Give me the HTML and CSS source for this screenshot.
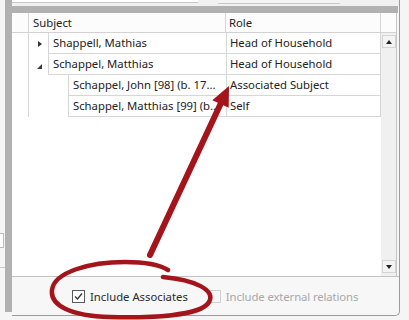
FILE: index.html
```html
<!DOCTYPE html>
<html lang="en">

<head>
    <meta charset="UTF-8">
    <meta name="viewport" content="width=device-width, initial-scale=1.0">
    <title>Relations</title>
    <link rel="stylesheet" href="styles.css">
</head>

<body>
    <div class="screen">
        <div class="side-pane">
            <div class="side-input"></div>
            <div class="side-rule"></div>
        </div>
        <div class="splitter"></div>

        <div class="panel">
            <div class="toolbar">
                <div class="tool-box wide"></div>
                <div class="tool-box"></div>
            </div>
            <div class="panel-band"></div>

            <div class="grid">
                <div class="grid-head">
                    <div class="col-indent"></div>
                    <div class="col-subject">Subject</div>
                    <div class="col-role">Role</div>
                    <div class="col-scroll"></div>
                </div>

                <div class="grid-body">
                    <div class="rows">
                        <div class="row">
                            <div class="row-indent"></div>
                            <div class="expander"><span class="arrow-closed"></span></div>
                            <div class="cell subject">Shappell, Mathias</div>
                            <div class="cell role">Head of Household</div>
                        </div>
                        <div class="row">
                            <div class="row-indent"></div>
                            <div class="expander">
                                <svg class="arrow-open" width="5" height="5" viewBox="0 0 5 5">
                                    <polygon points="5,0 5,5 0,5" fill="#3a3a3a" />
                                </svg>
                            </div>
                            <div class="cell subject">Schappel, Matthias</div>
                            <div class="cell role">Head of Household</div>
                        </div>
                        <div class="row child">
                            <div class="row-indent"></div>
                            <div class="expander"></div>
                            <div class="cell subject">Schappel, John [98] (b. 17...</div>
                            <div class="cell role">Associated Subject</div>
                        </div>
                        <div class="row child">
                            <div class="row-indent"></div>
                            <div class="expander"></div>
                            <div class="cell subject">Schappel, Matthias [99] (b...</div>
                            <div class="cell role">Self</div>
                        </div>
                    </div>

                    <div class="scrollbar">
                        <div class="scroll-btn"><span class="tri-up"></span></div>
                        <div class="scroll-btn"><span class="tri-down"></span></div>
                    </div>
                </div>
            </div>

            <div class="options">
                <label class="option">
                    <span class="check">
                        <svg width="11" height="11" viewBox="0 0 11 11">
                            <polyline points="2,5.5 4.5,8 9,2.5" fill="none" stroke="#333" stroke-width="1.3" />
                        </svg>
                    </span>
                    Include Associates
                </label>
                <label class="option disabled">
                    <span class="check"></span>
                    Include external relations
                </label>
            </div>
        </div>

        <!-- red callout drawn over the screenshot -->
        <svg class="annotation" width="409" height="320" viewBox="0 0 409 320">
            <g fill="none" stroke="#a3141b" stroke-linecap="round">
                <line x1="150" y1="255" x2="221" y2="103" stroke-width="6" />
                <path d="M163 277 C195 280 216 290 209 302 C201 316 150 318 110 317 C70 316 50 305 52 290 C54 272 90 262 125 262 C146 262 160 265 168 270"
                    stroke-width="4.5" />
            </g>
            <polygon points="229,86 212.3,100.2 228.7,107.8" fill="#a3141b" />
        </svg>
    </div>
</body>

</html>
```

FILE: styles.css
```css
body {
    margin: 0;
    padding: 0;
    font-family: "Noto Sans", "Open Sans", sans-serif;
    font-size: 11.3px;
    color: #222;
    background: #f5f5f5;
}

.screen {
    position: relative;
    display: flex;
    width: 409px;
    height: 320px;
    overflow: hidden;
    background: #f5f5f5;
}

.side-pane {
    width: 5px;
    display: flex;
    flex-direction: column;
}

.side-input {
    margin-top: 233px;
    width: 3px;
    height: 13px;
    background: #fff;
    border: 1px solid #bdbdbd;
    border-left: none;
}

.side-rule {
    margin-top: 19px;
    height: 1px;
    background: #c8c8c8;
}

.splitter {
    width: 7px;
    height: 312px;
    background: #b1b1b1;
}

.panel {
    box-sizing: border-box;
    width: 388px;
    height: 316px;
    display: flex;
    flex-direction: column;
    border-right: 1px solid #9c9c9c;
    border-bottom: 1px solid #9c9c9c;
    border-bottom-right-radius: 5px;
    background: #f7f7f7;
}

.toolbar {
    height: 6px;
    display: flex;
    gap: 20px;
    background: #f0f0f0;
}

.tool-box {
    width: 122px;
    height: 3px;
    background: #f3f3f3;
    border-bottom: 1px solid #c8c8c8;
}

.tool-box.wide {
    width: 186px;
    height: 2px;
    background: #fff;
}

.panel-band {
    height: 7px;
    margin-right: 1px;
    background: #b1b1b1;
}

.grid {
    box-sizing: border-box;
    height: 263px;
    width: 385px;
    display: flex;
    flex-direction: column;
    border-right: 1px solid #c4c4c4;
    background: #fff;
}

.grid-head {
    display: flex;
    height: 20px;
    box-sizing: border-box;
    border-bottom: 1px solid #d2d2d2;
    background: #fcfcfc;
    line-height: 19px;
}

.col-indent {
    width: 16px;
    border-right: 1px solid #d6d6d6;
}

.col-subject {
    width: 192px;
    padding-left: 4px;
    border-right: 1px solid #d6d6d6;
}

.col-role {
    width: 151px;
    padding-left: 3px;
    border-right: 1px solid #d6d6d6;
}

.col-scroll {
    flex: 1;
}

.grid-body {
    flex: 1;
    display: flex;
}

.rows {
    width: 369px;
}

.row {
    display: flex;
    height: 21px;
}

.row-indent {
    width: 16px;
    border-right: 1px solid #d6d6d6;
}

.expander {
    width: 19px;
    display: flex;
    align-items: center;
}

.row.child .expander {
    width: 39px;
}

.arrow-closed {
    margin-left: 9px;
    width: 0;
    height: 0;
    border-left: 4px solid #333;
    border-top: 3.5px solid transparent;
    border-bottom: 3.5px solid transparent;
}

.arrow-open {
    margin-left: 8px;
    margin-top: 3px;
}

.cell {
    box-sizing: border-box;
    height: 21px;
    line-height: 20px;
    padding-left: 4px;
    white-space: nowrap;
    overflow: hidden;
    border-left: 1px solid #d6d6d6;
    border-bottom: 1px solid #d6d6d6;
}

.cell.subject {
    flex: 1;
}

.cell.role {
    width: 155px;
    padding-left: 3px;
    border-right: 1px solid #d6d6d6;
}

.scrollbar {
    flex: 1;
    display: flex;
    flex-direction: column;
    justify-content: space-between;
    align-items: center;
    padding: 2px 0 3px;
    background: #f0f0f0;
}

.scroll-btn {
    box-sizing: border-box;
    width: 14px;
    height: 13px;
    display: flex;
    align-items: center;
    justify-content: center;
    border: 1px solid #d4d4d4;
    background: #f3f3f3;
}

.tri-up,
.tri-down {
    width: 0;
    height: 0;
    border-left: 3.5px solid transparent;
    border-right: 3.5px solid transparent;
}

.tri-up {
    border-bottom: 4px solid #222;
}

.tri-down {
    border-top: 4px solid #222;
}

.options {
    flex: 1;
    display: flex;
    align-items: center;
    padding-left: 60px;
    border-top: 1px solid #c2c2c2;
    border-bottom-right-radius: 5px;
    background: #f7f7f7;
    color: #2a2a2a;
}

.option {
    display: flex;
    align-items: center;
    gap: 5px;
    margin-right: 20px;
    white-space: nowrap;
}

.option.disabled {
    color: #a8a8a8;
    letter-spacing: -0.1px;
}

.check {
    box-sizing: border-box;
    flex-shrink: 0;
    width: 13px;
    height: 13px;
    display: flex;
    align-items: center;
    justify-content: center;
    border: 1px solid #5a5a5a;
    background: #fff;
}

.option.disabled .check {
    border-color: #d0d0d0;
    background: #f7f7f7;
}

.annotation {
    position: absolute;
    left: 0;
    top: 0;
    pointer-events: none;
}
```
